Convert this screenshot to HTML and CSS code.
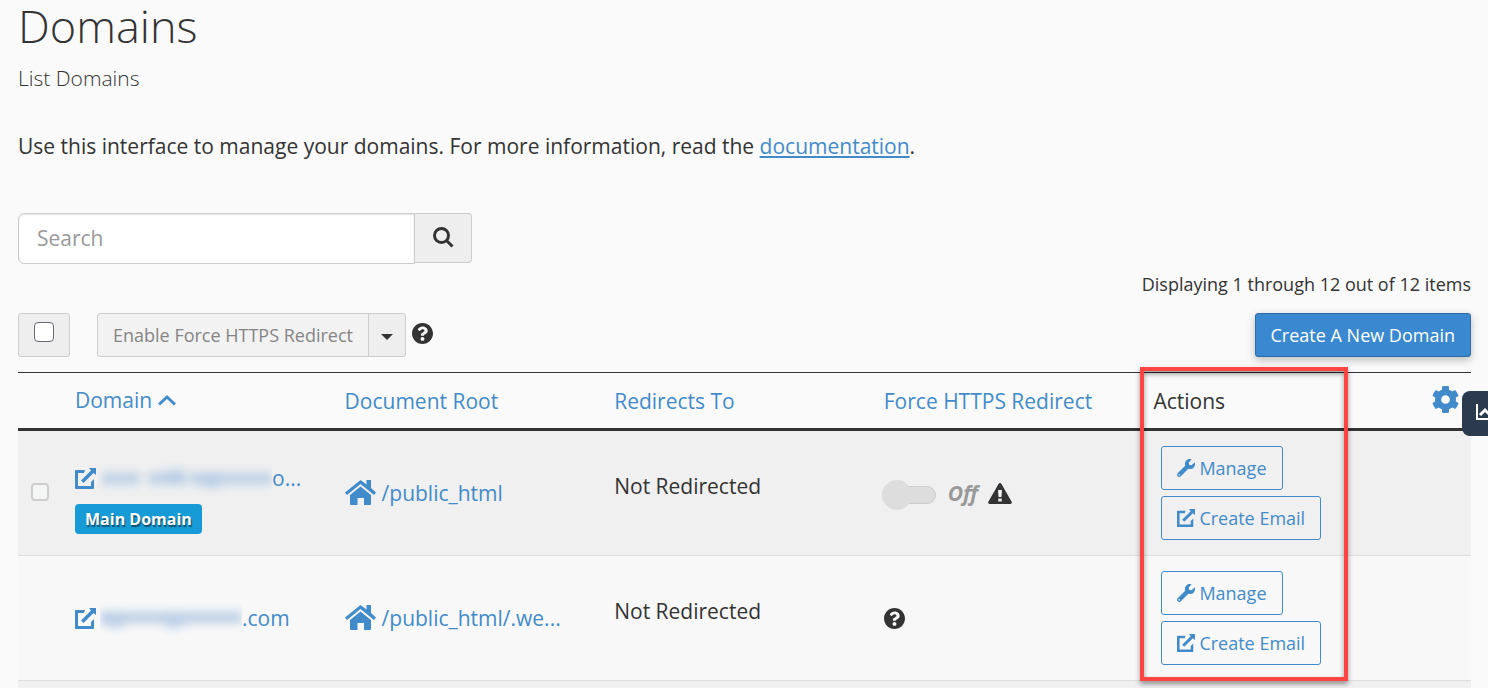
FILE: index.html
```html
<!DOCTYPE html>
<html lang="en">
<head>
  <meta charset="UTF-8">
  <meta name="viewport" content="width=device-width, initial-scale=1.0">
  <title>Domains</title>
  <link rel="stylesheet" href="styles.css">
</head>
<body>

  <!-- shared icons -->
  <svg class="sprite" aria-hidden="true">
    <symbol id="icon-search" viewBox="0 0 21 21"><path fill="none" stroke="currentColor" stroke-width="3" d="M8.500 1.500A7 7 0 1 1 8.500 15.500A7 7 0 1 1 8.500 1.500M13.500 13.500L19.500 19.500"/></symbol>
    <symbol id="icon-help" viewBox="8 8 496 496"><path d="M504 256c0 136.997-111.043 248-248 248S8 392.997 8 256C8 119.083 119.043 8 256 8s248 111.083 248 248zM262.655 90c-54.497 0-89.255 22.957-116.549 63.758-3.536 5.286-2.353 12.415 2.715 16.258l34.699 26.31c5.205 3.947 12.621 3.008 16.665-2.122 17.864-22.658 30.113-35.797 57.303-35.797 20.429 0 45.698 13.148 45.698 32.958 0 14.976-12.363 22.667-32.534 33.976C247.128 238.528 216 254.941 216 296v4c0 6.627 5.373 12 12 12h56c6.627 0 12-5.373 12-12v-1.333c0-28.462 83.186-29.647 83.186-106.667 0-58.002-60.165-102-116.531-102zM256 338c-25.365 0-46 20.635-46 46 0 25.364 20.635 46 46 46s46-20.636 46-46c0-25.365-20.635-46-46-46z"/></symbol>
    <symbol id="icon-wrench" viewBox="0 0 512 512"><path d="M507.73 109.1c-2.24-9.03-13.54-12.09-20.12-5.51l-74.36 74.36-67.88-11.31-11.31-67.88 74.36-74.36c6.62-6.62 3.43-17.9-5.66-20.16-47.38-11.74-99.55.91-136.58 37.93-39.64 39.64-50.55 97.1-34.05 147.2L18.74 402.76c-24.99 24.99-24.99 65.51 0 90.5 24.99 24.99 65.51 24.99 90.5 0l213.21-213.21c50.12 16.71 107.47 5.68 147.37-34.22 37.07-37.07 49.7-89.32 37.91-136.73zM64 472c-13.25 0-24-10.75-24-24 0-13.26 10.75-24 24-24s24 10.74 24 24c0 13.25-10.75 24-24 24z"/></symbol>
    <symbol id="icon-gear" viewBox="8 8 496 496"><path d="M487.4 315.7l-42.6-24.6c4.3-23.2 4.3-47 0-70.2l42.6-24.6c4.9-2.8 7.1-8.6 5.5-14-11.1-35.6-30-67.8-54.7-94.6-3.8-4.1-10-5.1-14.8-2.3L380.8 110c-17.9-15.4-38.5-27.3-60.8-35.1V25.8c0-5.6-3.9-10.5-9.4-11.7-36.7-8.2-74.3-7.8-109.2 0-5.5 1.2-9.4 6.1-9.4 11.7V75c-22.2 7.9-42.8 19.8-60.8 35.1L88.7 85.5c-4.9-2.8-11-1.9-14.8 2.3-24.7 26.7-43.6 58.9-54.7 94.6-1.7 5.4.6 11.2 5.5 14L67.3 221c-4.3 23.2-4.3 47 0 70.2l-42.6 24.6c-4.9 2.8-7.1 8.6-5.5 14 11.1 35.6 30 67.8 54.7 94.6 3.8 4.1 10 5.1 14.8 2.3l42.6-24.6c17.9 15.4 38.5 27.3 60.8 35.1v49.2c0 5.6 3.9 10.5 9.4 11.7 36.7 8.2 74.3 7.8 109.2 0 5.5-1.2 9.4-6.1 9.4-11.7v-49.2c22.2-7.9 42.8-19.8 60.8-35.1l42.6 24.6c4.9 2.8 11 1.9 14.8-2.3 24.7-26.7 43.6-58.9 54.7-94.6 1.5-5.5-.7-11.3-5.6-14.1zM256 336c-44.1 0-80-35.9-80-80s35.9-80 80-80 80 35.9 80 80-35.9 80-80 80z"/></symbol>
    <symbol id="icon-external" viewBox="0 0 21 21"><path d="M10 2H1Q0 2 0 3V20Q0 21 1 21H18Q19 21 19 20V11L16 14V18H3V5H9ZM14 0H21V7L18.500 5L8.500 15L6 12.500L16 2.500Z"/></symbol>
    <symbol id="icon-home" viewBox="0 0 31 25"><path d="M15.500 0L21.500 4.500V0H26V8L31 12.500L29 15L15.500 4L2 15L0 12.500ZM15.500 6.500L26 15V24Q26 25 25 25H19V18H12.500V25H6Q5 25 5 24V15Z"/></symbol>
    <symbol id="icon-warning" viewBox="0 0 24 21"><path fill-rule="evenodd" d="M10.500 1Q12 -1 13.500 1L23.500 18.500Q24.500 21 22 21H2Q-.5 21 .5 18.500ZM10 7L10.500 14H13.500L14 7ZM10.300 15.500V18.500H13.700V15.500Z"/></symbol>
    <symbol id="icon-up" viewBox="0 0 18 12"><path fill="none" stroke="currentColor" stroke-width="3" d="M1 10.500L9 3L17 10.500"/></symbol>
    <symbol id="icon-chart" viewBox="0 0 22 18"><path fill="none" stroke="currentColor" stroke-width="2" d="M1 1V16H22"/><path fill="none" stroke="currentColor" stroke-width="3" d="M4 12L9 7L13 11L20 4"/></symbol>
  </svg>

  <main>
    <h1>Domains</h1>
    <h2>List Domains</h2>
    <p class="intro">Use this interface to manage your domains. For more information, read the <a href="#">documentation</a>.</p>

    <form class="search">
      <input type="text" placeholder="Search" aria-label="Search">
      <button type="button" aria-label="Search"><svg class="icon-md"><use href="#icon-search"/></svg></button>
    </form>

    <p class="count">Displaying 1 through 12 out of 12 items</p>

    <div class="toolbar">
      <label class="select-all"><input type="checkbox" aria-label="Select all"></label>
      <div class="btn-group">
        <button class="btn-action" disabled>Enable Force HTTPS Redirect</button>
        <button class="btn-caret" aria-label="More actions"><span class="caret"></span></button>
      </div>
      <svg class="icon-md help"><use href="#icon-help"/></svg>
      <button class="btn-create">Create A New Domain</button>
    </div>

    <table>
      <colgroup>
        <col class="col-check">
        <col span="5">
        <col class="col-gear">
      </colgroup>
      <thead>
        <tr>
          <th></th>
          <th><a class="sorted" href="#">Domain <svg class="icon-up"><use href="#icon-up"/></svg></a></th>
          <th><a href="#">Document Root</a></th>
          <th><a href="#">Redirects To</a></th>
          <th><a href="#">Force HTTPS Redirect</a></th>
          <th class="actions-head">Actions<div class="highlight"></div></th>
          <th class="gear-head"><button class="btn-gear" aria-label="Settings"><svg class="icon-gear"><use href="#icon-gear"/></svg></button></th>
        </tr>
      </thead>
      <tbody>
        <tr>
          <td class="check"><input type="checkbox" aria-label="Select domain" disabled></td>
          <td class="main-domain">
            <a class="domain" href="#"><svg class="icon-md"><use href="#icon-external"/></svg><span class="redacted long"></span>o...</a>
            <span class="badge">Main Domain</span>
          </td>
          <td><a class="root" href="#"><svg class="icon-home"><use href="#icon-home"/></svg>/public_html</a></td>
          <td class="redirect">Not Redirected</td>
          <td>
            <div class="https">
              <button class="switch" aria-label="Force HTTPS Redirect" disabled></button>
              <span class="off">Off</span>
              <svg class="icon-warning"><use href="#icon-warning"/></svg>
            </div>
          </td>
          <td>
            <div class="actions">
              <button><svg class="icon-sm"><use href="#icon-wrench"/></svg>Manage</button>
              <button><svg class="icon-sm"><use href="#icon-external"/></svg>Create Email</button>
            </div>
          </td>
          <td></td>
        </tr>
        <tr>
          <td></td>
          <td><a class="domain" href="#"><svg class="icon-md"><use href="#icon-external"/></svg><span class="redacted"></span>.com</a></td>
          <td><a class="root" href="#"><svg class="icon-home"><use href="#icon-home"/></svg>/public_html/.we...</a></td>
          <td class="redirect">Not Redirected</td>
          <td><div class="https"><svg class="icon-md"><use href="#icon-help"/></svg></div></td>
          <td>
            <div class="actions">
              <button><svg class="icon-sm"><use href="#icon-wrench"/></svg>Manage</button>
              <button><svg class="icon-sm"><use href="#icon-external"/></svg>Create Email</button>
            </div>
          </td>
          <td></td>
        </tr>
        <tr>
          <td class="next-row" colspan="7"></td>
        </tr>
      </tbody>
    </table>
  </main>

  <button class="side-tab" aria-label="Statistics"><svg class="icon-chart"><use href="#icon-chart"/></svg></button>

</body>
</html>
```
FILE: styles.css
```css
:root {
  --blue: #428bca;
  --text: #333;
  --border: #ccc;
  --grey: #eee;
}

* {
  margin: 0;
  padding: 0;
  box-sizing: border-box;
}

body {
  font-family: "Open Sans", sans-serif;
  font-size: 21px;
  line-height: 30px;
  color: var(--text);
  background-color: #fafafa;
}

main {
  padding: 0 17px 0 18px;
}

a {
  color: var(--blue);
  text-decoration: none;
}

button,
input {
  font-family: inherit;
  font-size: inherit;
  color: inherit;
}

svg {
  fill: currentColor;
  flex: none;
}

.sprite {
  position: absolute;
  width: 0;
  height: 0;
}

.icon-sm {
  width: 18px;
  height: 18px;
}

.icon-md {
  width: 21px;
  height: 21px;
}

h1 {
  font-size: 45px;
  font-weight: 300;
  line-height: 52px;
}

h2 {
  font-size: 21px;
  font-weight: 300;
  line-height: 30px;
  margin-top: 11px;
}

.intro {
  margin-top: 38px;
}

.intro a {
  text-decoration: underline;
  text-decoration-thickness: 2px;
  text-underline-offset: 2px;
}

.search {
  display: flex;
  align-items: flex-start;
  margin-top: 52px;
}

.search input {
  width: 397px;
  height: 51px;
  padding: 0 18px 2px;
  border: 1px solid var(--border);
  border-radius: 6px 0 0 6px;
  background-color: white;
  box-shadow: inset 0 1px 2px rgba(0,0,0,0.1);
}

.search input::placeholder {
  color: #999;
}

.search button {
  display: flex;
  align-items: center;
  justify-content: center;
  width: 57px;
  height: 50px;
  padding-bottom: 2px;
  border: 1px solid var(--border);
  border-left: none;
  border-radius: 0 4px 4px 0;
  background-color: var(--grey);
}

.count {
  font-size: 18px;
  line-height: 24px;
  text-align: right;
  margin-top: 8px;
}

.toolbar {
  display: flex;
  margin-top: 17px;
  font-size: 18px;
}

.select-all {
  display: flex;
  justify-content: center;
  width: 52px;
  height: 44px;
  padding-top: 8px;
  border: 1px solid var(--border);
  border-radius: 3px;
  background-color: var(--grey);
}

input[type="checkbox"] {
  appearance: none;
  width: 20px;
  height: 20px;
  border: 1px solid #6b6570;
  border-radius: 4px;
  background-color: white;
}

.btn-group {
  display: flex;
  margin-left: 27px;
}

.btn-group button {
  height: 44px;
  border: 1px solid var(--border);
  background-color: var(--grey);
}

.btn-group .btn-action {
  padding: 0 15px;
  border-radius: 3px 0 0 3px;
  background-color: #f2f2f2;
  color: #858585;
}

.btn-group .btn-caret {
  display: flex;
  align-items: center;
  justify-content: center;
  width: 38px;
  margin-left: -1px;
  border-radius: 0 3px 3px 0;
}

.caret {
  margin-top: 3px;
  border: 6px solid transparent;
  border-top-color: var(--text);
  border-bottom: none;
}

.help {
  margin: 10px 0 0 6px;
}

.btn-create {
  height: 44px;
  margin-left: auto;
  padding: 0 15px;
  border: 1px solid #2d6ca2;
  border-radius: 3px;
  background-color: #3a89d0;
  color: white;
  box-shadow: 0 3px 8px rgba(0,0,0,0.25);
}

table {
  width: 100%;
  margin-top: 15px;
  border-collapse: separate;
  border-spacing: 0;
  border-top: 1px solid var(--text);
  table-layout: fixed;
}

.col-check {
  width: 48px;
}

.col-gear {
  width: 57px;
}

th {
  height: 58px;
  padding: 0 9px;
  border-bottom: 3px solid var(--text);
  font-weight: 400;
  text-align: left;
  white-space: nowrap;
}

td {
  height: 125px;
  padding: 0 9px;
  border-bottom: 1px solid #ddd;
  background-color: #f8f8f8;
  white-space: nowrap;
}

tr:nth-child(odd) td {
  background-color: #f0f0f0;
}

.next-row {
  height: 7px;
  border-bottom: none;
}

.sorted {
  display: flex;
  align-items: center;
  gap: 6px;
  padding-bottom: 2px;
}

.icon-up {
  width: 18px;
  height: 12px;
}

.gear-head {
  padding: 0 12px 2px 0;
}

.btn-gear {
  display: block;
  margin-left: auto;
  border: none;
  background: none;
  color: var(--blue);
}

.icon-gear {
  display: block;
  width: 27px;
  height: 27px;
}

.actions-head {
  position: relative;
}

/* red frame around the whole actions column */
.highlight {
  position: absolute;
  top: -6px;
  left: -4px;
  width: 208px;
  height: 314px;
  border: 4px solid #ff4444;
  box-shadow: 0 3px 5px rgba(0,0,0,0.4), inset 0 3px 5px rgba(0,0,0,0.4);
  pointer-events: none;
}

.check {
  padding: 0 0 2px 13px;
}

.check input {
  display: block;
  width: 18px;
  height: 18px;
  border: 2px solid var(--border);
  background-color: #f4f6f5;
}

.domain,
.root,
.https {
  display: flex;
  align-items: center;
}

.main-domain {
  padding-top: 8px;
}

.redacted {
  width: 142px;
  height: 36px;
  margin-left: 4px;
  overflow: hidden;
}

.redacted.long {
  width: 174px;
  margin-left: 2px;
}

.redacted::before {
  content: "";
  display: block;
  height: 36px;
  background:
    radial-gradient(closest-side, #b4cbe6, transparent) 0 12px / 30px 20px,
    radial-gradient(closest-side, #b4cbe6, transparent) 58px 12px / 32px 20px,
    linear-gradient(#c3d4e8, #c3d4e8) 0 11px / 100% 13px;
  background-repeat: no-repeat;
  filter: blur(4px);
}

.redacted.long::before {
  background:
    radial-gradient(closest-side, #b4cbe6, transparent) 60px 6px / 34px 20px,
    radial-gradient(closest-side, #b4cbe6, transparent) 98px 12px / 30px 20px,
    linear-gradient(#c3d4e8, #c3d4e8) 4px 12px / 38px 13px,
    linear-gradient(#c3d4e8, #c3d4e8) 50px 12px / 38px 13px,
    linear-gradient(#c3d4e8, #c3d4e8) 92px 12px / 84px 13px;
  background-repeat: no-repeat;
}

.badge {
  display: block;
  width: fit-content;
  margin-top: 8px;
  padding: 0 10px;
  border-radius: 4px;
  background-color: #179bd7;
  color: white;
  font-size: 16px;
  font-weight: 700;
  line-height: 30px;
  text-shadow: 1px 2px 1px rgba(0,0,0,0.5);
}

.root {
  gap: 6px;
}

.icon-home {
  width: 31px;
  height: 25px;
  margin-bottom: 2px;
}

.redirect {
  padding-bottom: 14px;
}

.switch {
  position: relative;
  width: 54px;
  height: 18px;
  margin: 3px 0 0 -2px;
  border: 1px solid #ccc;
  border-radius: 9px;
  background-color: #ddd;
}

.switch::before {
  content: "";
  position: absolute;
  top: -7px;
  left: -1px;
  width: 30px;
  height: 30px;
  border-radius: 50%;
  background-color: #ddd;
}

.off {
  margin: 0 10px 0 12px;
  color: #999;
  font-style: italic;
  font-weight: 700;
}

.icon-warning {
  width: 24px;
  height: 21px;
}

.actions {
  display: flex;
  flex-direction: column;
  align-items: flex-start;
  gap: 6px;
  padding-left: 8px;
}

.actions button {
  display: flex;
  align-items: center;
  gap: 4px;
  height: 44px;
  padding: 0 15px;
  border: 1px solid var(--blue);
  border-radius: 3px;
  background: none;
  color: var(--blue);
  font-size: 18px;
}

/* tab docked to the window edge */
.side-tab {
  position: fixed;
  top: 391px;
  right: 0;
  width: 26px;
  height: 45px;
  padding: 0 0 4px 14px;
  border: none;
  border-radius: 8px 0 0 8px;
  background-color: #2b3a4d;
  color: white;
  overflow: hidden;
}

.icon-chart {
  display: block;
  width: 22px;
  height: 18px;
}
```
